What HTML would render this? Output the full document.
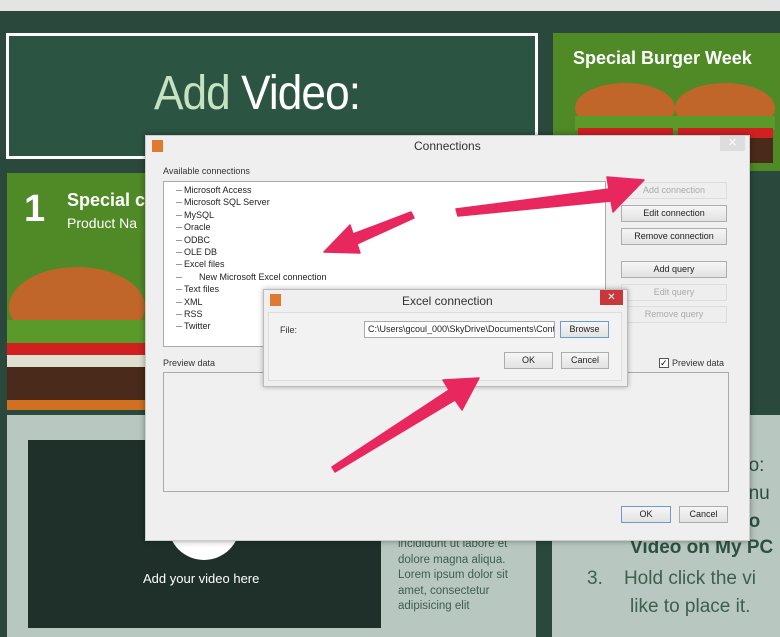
<!DOCTYPE html>
<html><head><meta charset="utf-8"><style>
*{margin:0;padding:0;box-sizing:border-box}
body{width:780px;height:637px;overflow:hidden;background:#2a483c;font-family:"Liberation Sans",sans-serif;position:relative}
.a{position:absolute}
.btn{position:absolute;height:17px;background:linear-gradient(#f6f6f6,#e2e2e2);border:1px solid #adadad;font-size:9px;color:#222;text-align:center;line-height:15px}
.dis{color:#aaa;border-color:#ddd;background:#eee}
.tree div{font-size:9px;color:#222;height:12.4px;line-height:12.4px;padding-left:20px;position:relative}
.tree div:before{content:"";position:absolute;left:12px;top:6px;width:6px;border-top:1px solid #999}
</style></head><body>
<div class="a" style="left:0;top:0;width:780px;height:11px;background:#e4e4e4"></div>
<div class="a" style="left:6px;top:33px;width:532px;height:126px;border:3px solid #fff;background:#2c5442"></div>
<div class="a" style="left:154px;top:66px;font-size:48px;color:#fff;letter-spacing:-1px;transform:scaleX(0.92);transform-origin:left"><span style="color:#c5e3c0">Add</span> Video:</div>
<div class="a" style="left:553px;top:33px;width:227px;height:138px;background:#4f8a26"></div>
<div class="a" style="left:573px;top:48px;font-size:18px;font-weight:bold;color:#fff">Special Burger Week</div>
<svg class="a" style="left:570px;top:78px" width="210" height="95"><g><ellipse cx="55" cy="30" rx="50" ry="25" fill="#c0662a"/><rect x="5" y="38" width="100" height="14" fill="#5a9a2a"/><rect x="8" y="50" width="95" height="10" fill="#d02020"/><rect x="8" y="60" width="95" height="25" fill="#4a2a1a"/><ellipse cx="155" cy="30" rx="50" ry="25" fill="#c0662a"/><rect x="105" y="38" width="100" height="14" fill="#5a9a2a"/><rect x="108" y="50" width="95" height="10" fill="#d02020"/><rect x="108" y="60" width="95" height="25" fill="#4a2a1a"/></g></svg>
<div class="a" style="left:7px;top:173px;width:140px;height:237px;background:#4f8a26"></div>
<div class="a" style="left:24px;top:188px;font-size:38px;font-weight:bold;color:#fff">1</div>
<div class="a" style="left:67px;top:190px;font-size:18px;font-weight:bold;color:#fff">Special c</div>
<div class="a" style="left:67px;top:215px;font-size:14px;color:#fff">Product Na</div>
<svg class="a" style="left:7px;top:265px" width="140" height="145"><ellipse cx="70" cy="42" rx="68" ry="40" fill="#c0662a"/><rect x="0" y="55" width="140" height="25" fill="#5a9a2a"/><rect x="0" y="78" width="140" height="18" fill="#d02020"/><rect x="0" y="90" width="140" height="12" fill="#e0e0d0"/><rect x="0" y="102" width="140" height="35" fill="#4a2a1a"/><rect x="0" y="135" width="140" height="10" fill="#d07020"/></svg>
<div class="a" style="left:7px;top:415px;width:529px;height:222px;background:#b8c8c0"></div>
<div class="a" style="left:28px;top:440px;width:353px;height:188px;background:#1f302a"></div>
<div class="a" style="left:168px;top:520px;width:72px;height:40px;background:#fff;border-radius:0 0 36px 36px"></div>
<div class="a" style="left:143px;top:571px;font-size:13px;color:#fff">Add your video here</div>
<div class="a" style="left:398px;top:537px;font-size:11.5px;line-height:15.5px;color:#3e5e4e">incididunt ut labore et<br>dolore magna aliqua.<br>Lorem ipsum dolor sit<br>amet, consectetur<br>adipisicing elit</div>
<div class="a" style="left:552px;top:415px;width:228px;height:222px;background:#b8c8c0"></div>
<div class="a" style="left:738px;top:452px;font-size:19px;line-height:28px;color:#2e5040">eo:<br>enu<br><b>eo</b></div>
<div class="a" style="left:630px;top:537px;font-size:19px;font-weight:bold;color:#2e5040;white-space:nowrap">Video on My PC</div>
<div class="a" style="left:587px;top:565px;font-size:19px;line-height:28px;color:#3e5e4e;white-space:nowrap">3.&nbsp;&nbsp;&nbsp;&nbsp;Hold click the vi<br><span style="margin-left:43px">like to place it.</span></div>

<div class="a" style="left:145px;top:135px;width:605px;height:406px;background:#efefef;border:1px solid #ccc;box-shadow:0 0 6px rgba(0,0,0,.4)"></div>
<div class="a" style="left:152px;top:140px;width:11px;height:12px;background:#e07a30"></div>
<div class="a" style="left:414px;top:139px;font-size:12px;color:#333">Connections</div>
<div class="a" style="left:720px;top:136px;width:25px;height:15px;background:#ddd;color:#fff;font-size:11px;text-align:center;line-height:15px">✕</div>
<div class="a" style="left:163px;top:166px;font-size:9px;color:#333">Available connections</div>
<div class="a tree" style="left:163px;top:181px;width:443px;height:166px;background:#fff;border:1px solid #aaa;padding-top:2px">
<div>Microsoft Access</div><div>Microsoft SQL Server</div><div>MySQL</div><div>Oracle</div><div>ODBC</div><div>OLE DB</div><div>Excel files</div><div style="padding-left:35px">New Microsoft Excel connection</div><div>Text files</div><div>XML</div><div>RSS</div><div>Twitter</div></div>
<div class="btn dis" style="left:621px;top:182px;width:106px">Add connection</div>
<div class="btn" style="left:621px;top:205px;width:106px">Edit connection</div>
<div class="btn" style="left:621px;top:228px;width:106px">Remove connection</div>
<div class="btn" style="left:621px;top:261px;width:106px">Add query</div>
<div class="btn dis" style="left:621px;top:284px;width:106px">Edit query</div>
<div class="btn dis" style="left:621px;top:306px;width:106px">Remove query</div>
<div class="a" style="left:163px;top:358px;font-size:9px;color:#333">Preview data</div>
<div class="a" style="left:659px;top:358px;width:10px;height:10px;border:1px solid #555;background:#fff;font-size:9px;line-height:8px">✓</div>
<div class="a" style="left:672px;top:358px;font-size:9px;color:#333">Preview data</div>
<div class="a" style="left:163px;top:372px;width:566px;height:120px;border:1px solid #aaa;background:#f0f0f0"></div>
<div class="btn" style="left:621px;top:506px;width:50px;border-color:#6a9ad0">OK</div>
<div class="btn" style="left:679px;top:506px;width:49px">Cancel</div>

<div class="a" style="left:263px;top:289px;width:365px;height:98px;background:#efefef;border:1px solid #bbb;box-shadow:0 0 5px rgba(0,0,0,.3)"></div>
<div class="a" style="left:270px;top:294px;width:11px;height:12px;background:#e07a30"></div>
<div class="a" style="left:402px;top:294px;font-size:12px;color:#333">Excel connection</div>
<div class="a" style="left:600px;top:290px;width:23px;height:15px;background:#c8383a;color:#fff;font-size:10px;text-align:center;line-height:15px">✕</div>
<div class="a" style="left:268px;top:312px;width:354px;height:69px;border:1px solid #ddd;background:#f2f2f2"></div>
<div class="a" style="left:280px;top:325px;font-size:9px;color:#333">File:</div>
<div class="a" style="left:364px;top:321px;width:191px;height:17px;background:#fff;border:1px solid #aaa;font-size:9px;line-height:15px;padding-left:3px;white-space:nowrap;overflow:hidden;color:#222">C:\Users\gcoul_000\SkyDrive\Documents\Conta</div>
<div class="btn" style="left:560px;top:321px;width:49px;border-color:#6a9ad0">Browse</div>
<div class="btn" style="left:504px;top:352px;width:49px">OK</div>
<div class="btn" style="left:561px;top:352px;width:48px">Cancel</div>

<svg class="a" style="left:0;top:0" width="780" height="637">
<g fill="#e8275f" stroke="#e8275f" stroke-width="1.5" stroke-linejoin="round">
<polygon points="456,209 609,189 607,177 644,180 613,212 611,201 458,216"/>
<polygon points="411,212 353,234 350,225 324,252 360,253 357,244 414,218"/>
<polygon points="332,467 449,390 443,380 479,378 462,410 455,400 335,472"/>
</g></svg>
</body></html>
